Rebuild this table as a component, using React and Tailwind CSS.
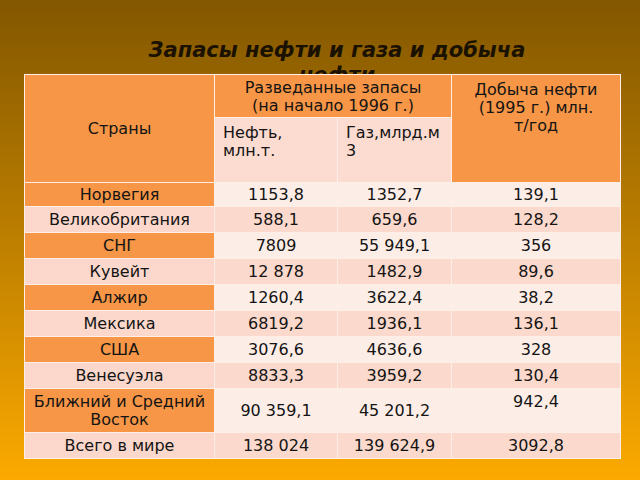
import React from "react";

const rows = [
  ["Норвегия", "1153,8", "1352,7", "139,1"],
  ["Великобритания", "588,1", "659,6", "128,2"],
  ["СНГ", "7809", "55 949,1", "356"],
  ["Кувейт", "12 878", "1482,9", "89,6"],
  ["Алжир", "1260,4", "3622,4", "38,2"],
  ["Мексика", "6819,2", "1936,1", "136,1"],
  ["США", "3076,6", "4636,6", "328"],
  ["Венесуэла", "8833,3", "3959,2", "130,4"],
  ["Ближний и Средний Восток", "90 359,1", "45 201,2", "942,4"],
  ["Всего в мире", "138 024", "139 624,9", "3092,8"],
];

export default function App() {
  return (
    <div
      className="w-[640px] h-[480px] overflow-hidden bg-gradient-to-b from-[#835700] to-[#fcaa00] text-[#141414]"
      style={{ fontFamily: '"DejaVu Sans", sans-serif' }}
    >
      <div className="pt-[38px] ml-[127px] w-[420px] text-center text-[21px] leading-[25px] font-bold italic text-[#1a1100]">
        Запасы нефти и газа и добыча нефти
      </div>
      <div className="relative z-10 -mt-[14px] ml-[24px] w-[597px] p-px bg-[#fdeee8]">
        <div className="grid gap-px grid-cols-[189px_122px_113px_168px] grid-rows-[42px_64px_23px_repeat(7,25px)_43px_25px] text-[16px] leading-[18px]">
          <div className="row-span-2 bg-[#f79646] flex items-center justify-center">Страны</div>
          <div className="col-span-2 bg-[#f79646] text-center pt-[4px]">
            Разведанные запасы
            <br />
            (на начало 1996 г.)
          </div>
          <div className="row-span-2 bg-[#f79646] text-center pt-[6px] px-[10px]">
            Добыча нефти
            <br />
            (1995 г.) млн.
            <br />
            т/год
          </div>
          <div className="bg-[#fcdbd0] pt-[6px] pl-[8px]">
            Нефть,
            <br />
            млн.т.
          </div>
          <div className="bg-[#fcdbd0] pt-[6px] pl-[8px]">
            Газ,млрд.м
            <br />3
          </div>
          {rows.map((r, i) => {
            const odd = i % 2 === 0;
            const c1 = odd ? "bg-[#f79646]" : "bg-[#fbd8cb]";
            const cd = odd ? "bg-[#fdede7]" : "bg-[#fbd9cc]";
            return (
              <React.Fragment key={i}>
                <div className={`${c1} flex items-center justify-center text-center`}>
                  {i === 8 ? (
                    <span>
                      Ближний и Средний
                      <br />
                      Восток
                    </span>
                  ) : (
                    r[0]
                  )}
                </div>
                <div className={`${cd} flex items-center justify-center`}>{r[1]}</div>
                <div className={`${cd} flex items-center justify-center`}>{r[2]}</div>
                <div className={`${cd} flex items-center justify-center text-center`}>
                  {i === 8 ? (
                    <span>
                      {r[3]}
                      <br />
                      {"\u00a0"}
                    </span>
                  ) : (
                    r[3]
                  )}
                </div>
              </React.Fragment>
            );
          })}
        </div>
      </div>
    </div>
  );
}
